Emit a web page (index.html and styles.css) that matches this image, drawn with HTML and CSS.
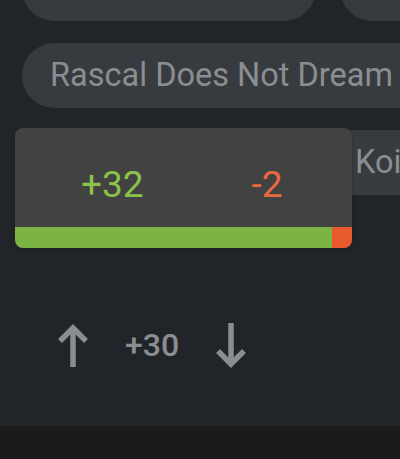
FILE: index.html
```html
<!DOCTYPE html>
<html lang="en">
<head>
<meta charset="utf-8">
<title>Votes</title>
<link rel="stylesheet" href="styles.css">
</head>
<body>
<div class="screen">
  <div class="feed">
    <div class="list">
      <div class="row">
        <div class="pill pill-w1">Oshi no Ko</div>
        <div class="pill">Frieren</div>
      </div>
      <div class="row">
        <div class="pill">Rascal Does Not Dream of Bunny Girl Senpai</div>
      </div>
      <div class="row">
        <div class="pill pill-w3">Horimiya</div>
        <div class="pill pill-wide">Koi wa Ameagari no You ni</div>
      </div>
    </div>
    <div class="popup">
      <div class="counts">
        <span class="up-count">+32</span>
        <span class="down-count">-2</span>
      </div>
      <div class="ratio">
        <div class="ratio-up"></div>
        <div class="ratio-down"></div>
      </div>
    </div>
  </div>
  <div class="vote">
    <svg class="arrow" width="34" height="46" viewBox="0 0 34 46" aria-label="Upvote">
      <line x1="17" y1="6" x2="17" y2="45" />
      <polyline points="4,19 17,6 30,19" />
    </svg>
    <span class="score">+30</span>
    <svg class="arrow" width="34" height="46" viewBox="0 0 34 46" aria-label="Downvote">
      <line x1="17" y1="1" x2="17" y2="42" />
      <polyline points="4,29 17,42 30,29" />
    </svg>
  </div>
  <div class="navbar"></div>
</div>
</body>
</html>
```
FILE: styles.css
```css
html, body {
  margin: 0;
  padding: 0;
  background: #212529;
}

.screen {
  width: 400px;
  height: 459px;
  overflow: hidden;
  display: flex;
  flex-direction: column;
  font-family: Roboto, "Noto Sans", sans-serif;
}

.feed {
  position: relative;
  height: 262px;
  flex: none;
  overflow: hidden;
}

.list {
  margin-top: -44px;
  padding-left: 22px;
  display: flex;
  flex-direction: column;
  gap: 22px;
}

.row {
  display: flex;
  gap: 24px;
  white-space: nowrap;
}

.pill {
  flex: none;
  height: 65px;
  line-height: 65px;
  border-radius: 33px;
  background: #373b3f;
  color: #8a8e91;
  font-size: 32.5px;
  padding: 0 28px;
}

.pill-w1 {
  width: 294px;
  box-sizing: border-box;
}

.pill-w3 {
  width: 260px;
  box-sizing: border-box;
}

.pill-wide {
  padding-left: 49px;
}

.popup {
  position: absolute;
  left: 15px;
  top: 128px;
  width: 337px;
  height: 120px;
  border-radius: 8px;
  background: #424242;
  overflow: hidden;
  display: flex;
  flex-direction: column;
  box-shadow: 0 1px 3px rgba(0, 0, 0, 0.25);
}

.counts {
  height: 99px;
  box-sizing: border-box;
  padding: 38px 0 0 66px;
  display: flex;
  gap: 108px;
  font-size: 37px;
  line-height: 37px;
}

.up-count {
  color: #8bc34a;
}

.down-count {
  color: #e8683f;
}

.ratio {
  height: 21px;
  display: flex;
}

.ratio-up {
  flex: 1;
  background: #7cb342;
}

.ratio-down {
  width: 20px;
  background: #e85a2c;
}

.vote {
  height: 164px;
  flex: none;
  display: flex;
  align-items: center;
  padding-left: 56px;
  gap: 35px;
  border-top: 1px solid #1f2226;
  box-sizing: border-box;
}

.arrow {
  display: block;
  fill: none;
  stroke: #8a8e91;
  stroke-width: 5.5;
  stroke-linecap: butt;
  stroke-linejoin: miter;
}

.score {
  color: #8a8e91;
  font-size: 32px;
  font-weight: 500;
  line-height: 32px;
}

.navbar {
  flex: 1;
  background: #1b1b1b;
}
```
